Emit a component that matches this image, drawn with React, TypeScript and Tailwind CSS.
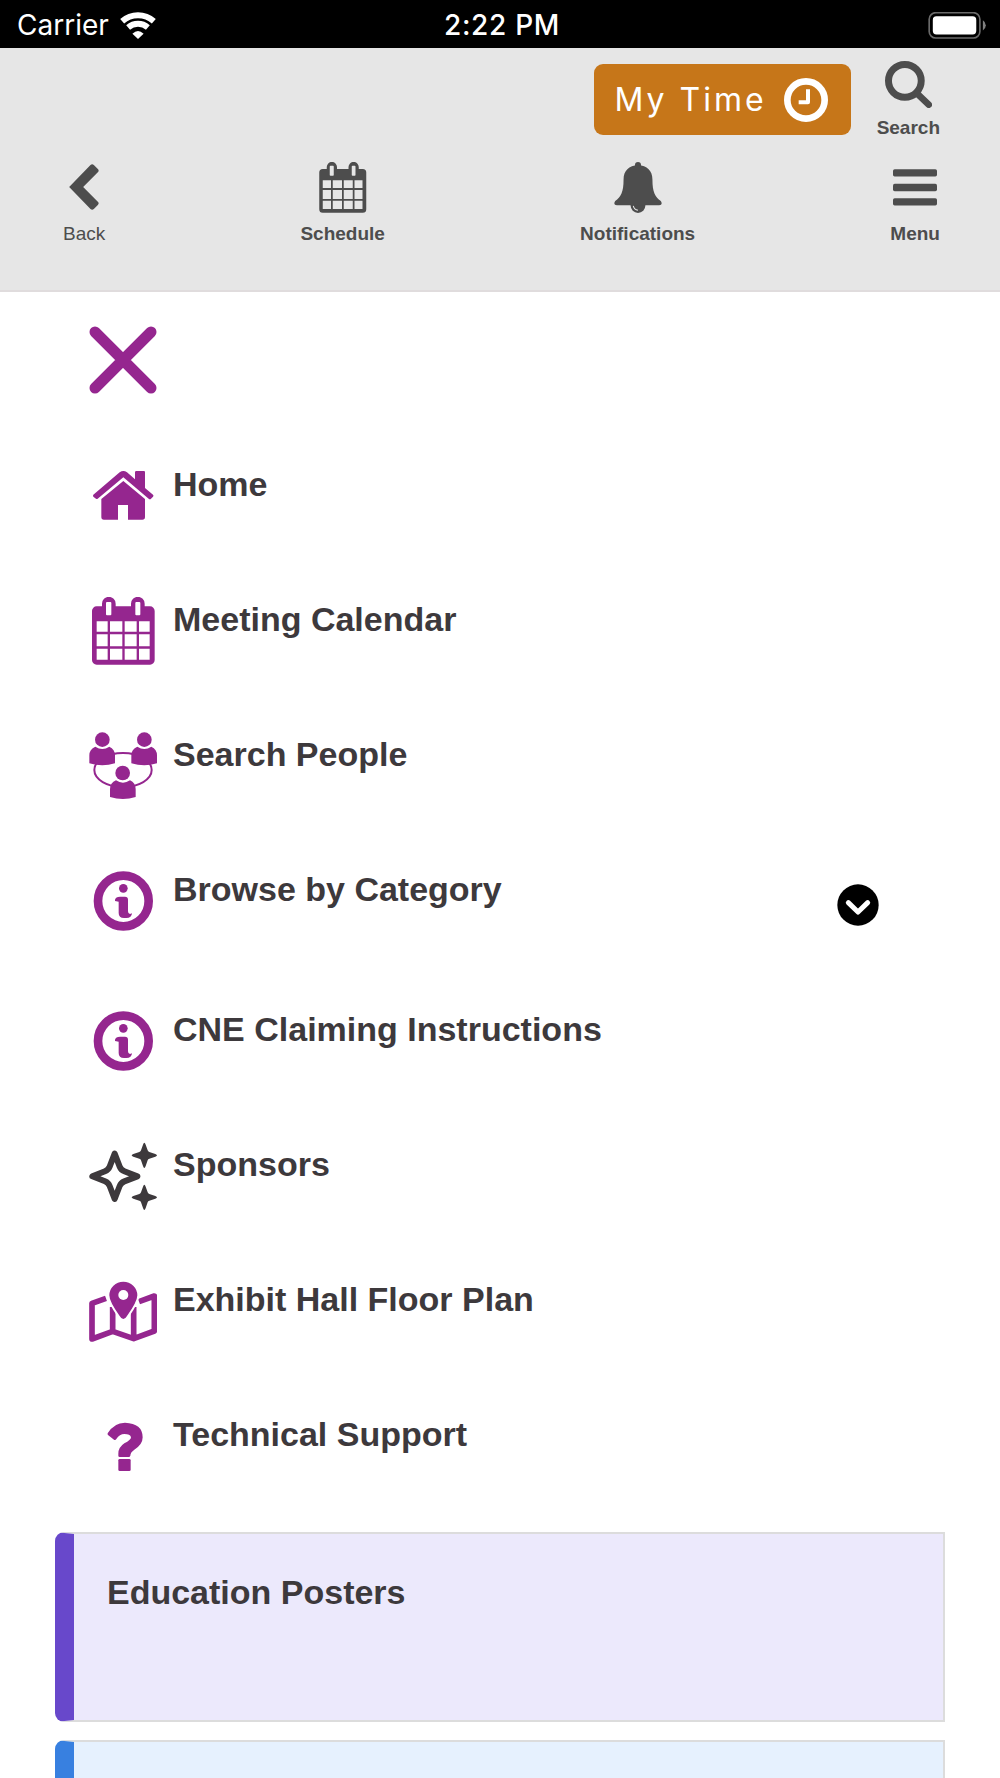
import type { ReactNode } from "react"
import { clsx } from "clsx"

function CalendarIcon({ className }: { className?: string }) {
  return (
    <svg viewBox="0 0 204 204" className={className} fill="currentColor" aria-hidden>
      <path
        fillRule="evenodd"
        d="M23 28H39V20a20 20 0 0 1 41 0V28H126V20a20 20 0 0 1 41 0V28H183a14 14 0 0 1 14 14V189a14 14 0 0 1-14 14H23a14 14 0 0 1-14-14V42a14 14 0 0 1 14-14Z
        M54 15h10q3 0 3 3v34q0 3-3 3h-10q-3 0-3-3v-34q0-3 3-3Z M142 15h9q3 0 3 3v34q0 3-3 3h-9q-3 0-3-3v-34q0-3 3-3Z
        M23 73h33v31h-33Z M63 73h37v31h-37Z M107 73h36v31h-36Z M150 73h32v31h-32Z
        M23 112h33v36h-33Z M63 112h37v36h-37Z M107 112h36v36h-36Z M150 112h32v36h-32Z
        M23 155h33v33h-33Z M63 155h37v33h-37Z M107 155h36v33h-36Z M150 155h32v33h-32Z"
      />
    </svg>
  )
}

function MenuGlyph({ children }: { children: ReactNode }) {
  return (
    <svg viewBox="0 0 204 204" className="size-[68px] shrink-0" fill="currentColor" aria-hidden>
      {children}
    </svg>
  )
}

function HomeIcon() {
  return (
    <MenuGlyph>
      <path d="M13 98 92 31Q103 23 114 31L138 52V31Q138 27 142 27H165Q168 27 168 31V78L192 98Q195 101 192 104L186 110Q183 113 179 110L103 46 26 110Q22 113 19 109L13 104Q11 101 13 98Z" />
      <path d="M103 57 168 111V165Q168 173 160 173H117V129H87V173H45Q37 173 37 165V111Z" />
    </MenuGlyph>
  )
}

const personBody = "M1 94V70Q1 52 19 44Q40 58 61 44Q78 52 78 70V94Q40 106 1 94Z"

function PeopleIcon() {
  return (
    <MenuGlyph>
      <ellipse cx="102" cy="114" rx="86" ry="51" fill="none" stroke="currentColor" strokeWidth="6" />
      {/* keeps the ring off the lower head */}
      <circle cx="101" cy="123" r="27" fill="white" />
      <circle cx="40" cy="23" r="22" />
      <path d={personBody} />
      <circle cx="166" cy="23" r="22" />
      <path d={personBody} transform="translate(126 0)" />
      <circle cx="101" cy="123" r="22" />
      <path d={personBody} transform="translate(62 101)" />
    </MenuGlyph>
  )
}

function InfoIcon() {
  return (
    <MenuGlyph>
      <circle cx="103" cy="102" r="76" fill="none" stroke="currentColor" strokeWidth="26" />
      <circle cx="103" cy="64" r="13" />
      <path d="M78 102V98Q80 89 93 89H108Q117 89 117 98V133Q117 141 123 141L129 139Q128 153 112 153H105Q89 153 89 138V104Z" />
    </MenuGlyph>
  )
}

const smallStar =
  "M0-38Q2-38 4-32L10-15Q11-11 15-10L33-4Q38-2 38 0Q38 2 33 4L15 10Q11 11 10 15L4 32Q2 38 0 38Q-2 38-4 32L-10 15Q-11 11-15 10L-33 4Q-38 2-38 0Q-38-2-33-4L-15-10Q-11-11-10-15L-4-32Q-2-38 0-38Z"

function SparkleIcon() {
  return (
    <MenuGlyph>
      <path
        d="M77 35 92 74Q96 84 106 88L145 103 106 118Q96 122 92 132L77 171 62 132Q58 122 48 118L10 103 48 88Q58 84 62 74Z"
        fill="none"
        stroke="currentColor"
        strokeWidth="18"
        strokeLinejoin="round"
      />
      <path d={smallStar} transform="translate(166 40)" />
      <path d={smallStar} transform="translate(166 166)" />
    </MenuGlyph>
  )
}

const pin = "M103 126Q97 126 92 117Q61 74 61 55A42 41 0 0 1 145 55Q145 74 114 117Q109 126 103 126Z"

function MapIcon() {
  return (
    <MenuGlyph>
      <path
        d="M51 64 9 79V186L71 163 134 185 196 162V57L150 74M71 90V163M134 90V185"
        fill="none"
        stroke="currentColor"
        strokeWidth="17"
        strokeLinejoin="round"
      />
      <path d={pin} fill="white" stroke="white" strokeWidth="12" />
      <path d={pin} />
      <circle cx="103" cy="54" r="15" fill="white" />
    </MenuGlyph>
  )
}

function HelpIcon() {
  return (
    <MenuGlyph>
      <path d="M56 64Q75 32 108 32Q161 34 161 76Q161 98 136 113Q124 121 124 131Q123 135 119 135H92Q88 135 88 131V125Q88 106 106 94Q126 84 126 76Q124 66 106 66Q92 66 82 81Q79 86 75 83L57 69Q55 67 56 64Z" />
      <rect x="88" y="141" width="37" height="36" rx="4" />
    </MenuGlyph>
  )
}

const menuItems = [
  { label: "Home", Icon: HomeIcon },
  { label: "Meeting Calendar", Icon: () => <CalendarIcon className="size-[68px] shrink-0" /> },
  { label: "Search People", Icon: PeopleIcon },
  { label: "Browse by Category", Icon: InfoIcon, expandable: true },
  { label: "CNE Claiming Instructions", Icon: InfoIcon },
  { label: "Sponsors", Icon: SparkleIcon, dark: true },
  { label: "Exhibit Hall Floor Plan", Icon: MapIcon },
  { label: "Technical Support", Icon: HelpIcon },
]

function StatusBar() {
  return (
    <div className="grid h-12 shrink-0 grid-cols-3 items-center bg-black pt-0.5 pr-[13px] pl-[17px] font-['Inter',sans-serif] text-[28px] leading-8 text-white">
      <div className="flex items-center gap-[11px]">
        <span>Carrier</span>
        <svg viewBox="0 0 108 82" className="h-[27px] w-9" fill="none" stroke="white" strokeWidth="18" aria-hidden>
          <path d="M6 28A72 72 0 0 1 102 28" />
          <path d="M24 47A46 46 0 0 1 84 47" />
          <path d="M54 82 37 66Q54 50 71 66Z" fill="white" stroke="none" />
        </svg>
      </div>
      <span className="text-center font-medium tracking-wide">2:22 PM</span>
      <svg viewBox="0 0 176 82" className="h-[27px] w-[59px] justify-self-end" aria-hidden>
        <rect x="2" y="2" width="154" height="77" rx="20" fill="none" stroke="#6b6b6b" strokeWidth="5" />
        <rect x="13" y="13" width="132" height="55" rx="11" fill="white" />
        <path d="M165 25Q174 31 174 40Q174 50 165 56Z" fill="#808080" />
      </svg>
    </div>
  )
}

function NavButton({ label, bold = true, children }: { label: string; bold?: boolean; children: ReactNode }) {
  return (
    <button type="button" className="flex flex-col items-center gap-3">
      <span className="flex h-[50px] items-center">{children}</span>
      <span className={clsx("text-[19px] leading-5", bold && "font-bold")}>{label}</span>
    </button>
  )
}

function Header() {
  return (
    <header className="shrink-0 border-b-2 border-[#e0dcdd] bg-[#e6e6e6] pt-[13px] pr-[60px] pb-[46px] pl-[63px] text-[#4d4d4d]">
      <div className="flex items-start justify-end gap-[26px]">
        <button
          type="button"
          className="mt-[3px] flex h-[71px] items-center gap-[17px] rounded-[9px] bg-[#c67619] pr-[23px] pl-5 font-['Inter',sans-serif] text-[32px] leading-10 tracking-[3px] text-white"
        >
          My Time
          <svg viewBox="0 0 132 132" className="size-11" fill="none" stroke="white" aria-hidden>
            <circle cx="66" cy="66" r="56" strokeWidth="20" />
            <path d="M72 34V73H44" strokeWidth="12" strokeLinejoin="round" />
          </svg>
        </button>
        <button type="button" className="flex flex-col items-center gap-2.5">
          <svg viewBox="0 0 142 142" className="size-[47px]" fill="none" stroke="currentColor" aria-hidden>
            <circle cx="60" cy="60" r="49.5" strokeWidth="21" />
            <path d="M98 99 132 132" strokeWidth="20" strokeLinecap="round" />
          </svg>
          <span className="text-[19px] leading-5 font-bold">Search</span>
        </button>
      </div>
      <nav aria-label="Main" className="mt-6 flex justify-between">
        <NavButton label="Back" bold={false}>
          <svg viewBox="0 0 89 138" className="h-[46px] w-[30px]" fill="currentColor" aria-hidden>
            <path d="M64 3Q69-2 74 3L86 15Q91 20 86 25L42 69 86 113Q91 118 86 123L74 135Q69 140 64 135L0 69Z" />
          </svg>
        </NavButton>
        <NavButton label="Schedule">
          <CalendarIcon className="size-[51px]" />
        </NavButton>
        <NavButton label="Notifications">
          <svg viewBox="0 0 142 152" className="h-[51px] w-12" fill="currentColor" aria-hidden>
            <rect x="62" width="18" height="24" rx="9" />
            <circle cx="71" cy="130" r="22" />
            <path d="M71 10C98 10 114 27 114 52C114 90 122 104 139 116Q146 128 134 129H8Q-4 128 3 116C20 104 28 90 28 52C28 27 44 10 71 10Z" />
            <path d="M57 131Q59 142 71 144" fill="none" stroke="#e6e6e6" strokeWidth="3" />
          </svg>
        </NavButton>
        <NavButton label="Menu">
          <svg viewBox="0 0 132 110" className="h-[37px] w-11" fill="currentColor" aria-hidden>
            <rect width="132" height="22" rx="5" />
            <rect y="44" width="132" height="22" rx="5" />
            <rect y="87" width="132" height="22" rx="5" />
          </svg>
        </NavButton>
      </nav>
    </header>
  )
}

export default function App() {
  return (
    <div className="flex h-screen flex-col overflow-hidden bg-white font-['Liberation_Sans',Arial,sans-serif] text-[#3d393c]">
      <StatusBar />
      <Header />
      <main className="pt-[34px]">
        <div className="pr-[121px] pl-[89px]">
          <button type="button" aria-label="Close menu" className="block text-[#95268f]">
            <svg viewBox="0 0 204 204" className="size-[68px]" stroke="currentColor" strokeWidth="33" strokeLinecap="round" aria-hidden>
              <path d="M18 18 186 186M186 18 18 186" />
            </svg>
          </button>
          <ul className="mt-[68px]">
            {menuItems.map(({ label, Icon, expandable, dark }) => (
              <li key={label} className={clsx("flex items-start", expandable ? "h-[140px]" : "h-[135px]")}>
                <a href="#" className="flex flex-1 items-start gap-4">
                  <span className={dark ? "text-[#3d393c]" : "text-[#95268f]"}>
                    <Icon />
                  </span>
                  <span className="text-[34px] leading-[44px] font-bold">{label}</span>
                </a>
                {expandable && (
                  <button type="button" aria-label={`Expand ${label}`} className="mt-[17px]">
                    <svg viewBox="0 0 126 126" className="size-[42px]" aria-hidden>
                      <circle cx="63" cy="63" r="62" />
                      <path d="M34 56 63 84 92 56" fill="none" stroke="white" strokeWidth="15" strokeLinecap="round" strokeLinejoin="round" />
                    </svg>
                  </button>
                )}
              </li>
            ))}
          </ul>
        </div>
        <div className="-mt-[15px] flex flex-col gap-[18px] px-[55px]">
          <section className="h-[190px] rounded-l-[9px] border-2 border-l-[19px] border-[#dcdcdc] border-l-[#6848cb] bg-[#ece9fc] px-[33px] py-9">
            <h2 className="text-[34px] leading-[44px] font-bold">Education Posters</h2>
          </section>
          <section className="h-[190px] rounded-l-[9px] border-2 border-l-[19px] border-[#dcdcdc] border-l-[#3880e0] bg-[#e6f1fe]" />
        </div>
      </main>
    </div>
  )
}
